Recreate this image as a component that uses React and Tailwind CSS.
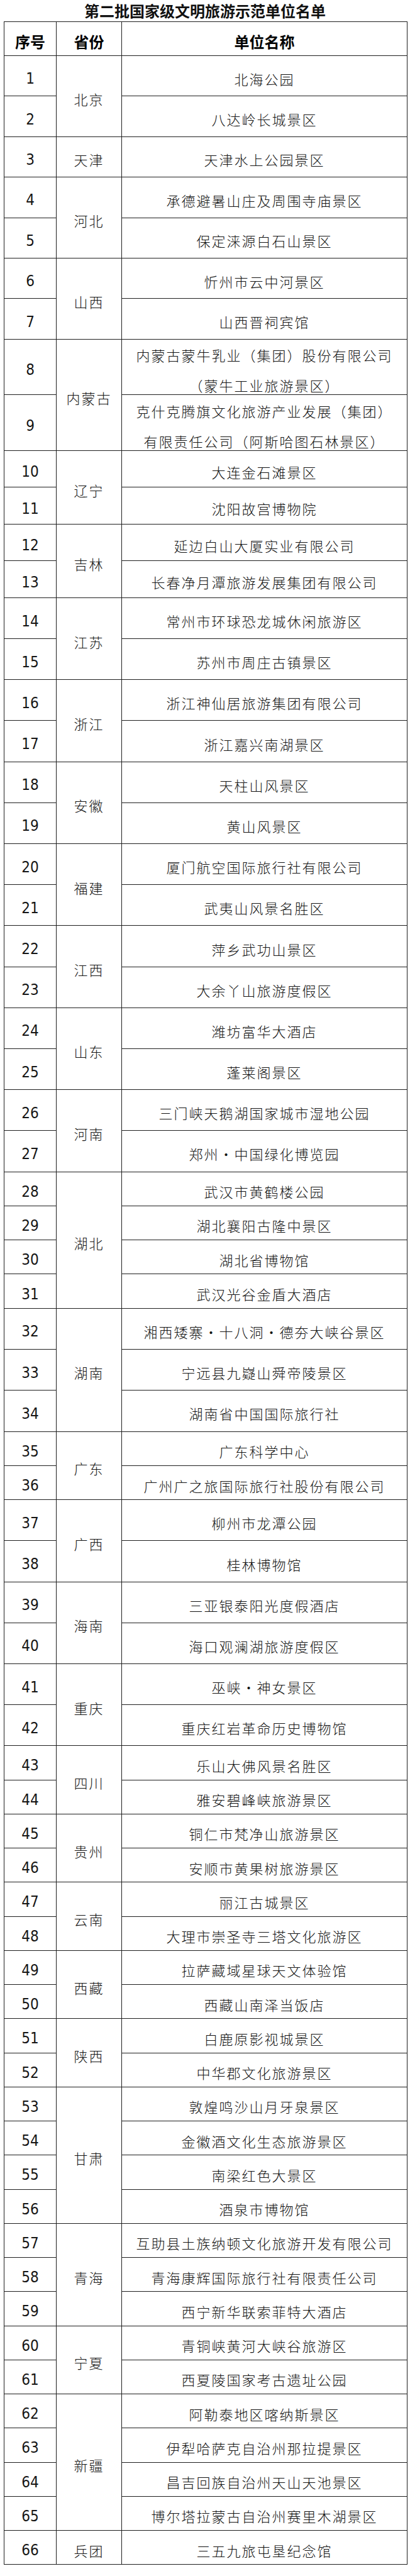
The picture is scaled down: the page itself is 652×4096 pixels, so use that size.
import React from "react";

const groups = [
  ["北京", ["北海公园", "八达岭长城景区"]],
  ["天津", ["天津水上公园景区"]],
  ["河北", ["承德避暑山庄及周围寺庙景区", "保定涞源白石山景区"]],
  ["山西", ["忻州市云中河景区", "山西晋祠宾馆"]],
  [
    "内蒙古",
    [
      ["内蒙古蒙牛乳业（集团）股份有限公司", "（蒙牛工业旅游景区）"],
      ["克什克腾旗文化旅游产业发展（集团）", "有限责任公司（阿斯哈图石林景区）"],
    ],
  ],
  ["辽宁", ["大连金石滩景区", "沈阳故宫博物院"]],
  ["吉林", ["延边白山大厦实业有限公司", "长春净月潭旅游发展集团有限公司"]],
  ["江苏", ["常州市环球恐龙城休闲旅游区", "苏州市周庄古镇景区"]],
  ["浙江", ["浙江神仙居旅游集团有限公司", "浙江嘉兴南湖景区"]],
  ["安徽", ["天柱山风景区", "黄山风景区"]],
  ["福建", ["厦门航空国际旅行社有限公司", "武夷山风景名胜区"]],
  ["江西", ["萍乡武功山景区", "大余丫山旅游度假区"]],
  ["山东", ["潍坊富华大酒店", "蓬莱阁景区"]],
  ["河南", ["三门峡天鹅湖国家城市湿地公园", "郑州·中国绿化博览园"]],
  ["湖北", ["武汉市黄鹤楼公园", "湖北襄阳古隆中景区", "湖北省博物馆", "武汉光谷金盾大酒店"]],
  ["湖南", ["湘西矮寨·十八洞·德夯大峡谷景区", "宁远县九嶷山舜帝陵景区", "湖南省中国国际旅行社"]],
  ["广东", ["广东科学中心", "广州广之旅国际旅行社股份有限公司"]],
  ["广西", ["柳州市龙潭公园", "桂林博物馆"]],
  ["海南", ["三亚银泰阳光度假酒店", "海口观澜湖旅游度假区"]],
  ["重庆", ["巫峡·神女景区", "重庆红岩革命历史博物馆"]],
  ["四川", ["乐山大佛风景名胜区", "雅安碧峰峡旅游景区"]],
  ["贵州", ["铜仁市梵净山旅游景区", "安顺市黄果树旅游景区"]],
  ["云南", ["丽江古城景区", "大理市崇圣寺三塔文化旅游区"]],
  ["西藏", ["拉萨藏域星球天文体验馆", "西藏山南泽当饭店"]],
  ["陕西", ["白鹿原影视城景区", "中华郡文化旅游景区"]],
  ["甘肃", ["敦煌鸣沙山月牙泉景区", "金徽酒文化生态旅游景区", "南梁红色大景区", "酒泉市博物馆"]],
  ["青海", ["互助县土族纳顿文化旅游开发有限公司", "青海康辉国际旅行社有限责任公司", "西宁新华联索菲特大酒店"]],
  ["宁夏", ["青铜峡黄河大峡谷旅游区", "西夏陵国家考古遗址公园"]],
  ["新疆", ["阿勒泰地区喀纳斯景区", "伊犁哈萨克自治州那拉提景区", "昌吉回族自治州天山天池景区", "博尔塔拉蒙古自治州赛里木湖景区"]],
  ["兵团", ["三五九旅屯垦纪念馆"]],
];

const spans = { 1: "row-span-1", 2: "row-span-2", 3: "row-span-3", 4: "row-span-4" };

// row heights follow the source document, which is not uniform
const rowHeight = (n) => {
  if (n <= 7) return "h-[64.4px]";
  if (n <= 9) return "h-[88.6px]";
  if (n <= 13) return "h-[58.5px]";
  if (n <= 27) return "h-[65.2px]";
  if (n <= 31) return "h-[54.3px]";
  if (n <= 34) return "h-[65.3px]";
  if (n <= 36) return "h-[54.3px]";
  if (n <= 42) return "h-[65.2px]";
  return "h-[54.25px]";
};

const cell = "flex items-center justify-center border-r border-b border-[#1f1f1f] pt-[9px]";
const cjk = "font-['Noto_Sans_CJK_SC',sans-serif] font-light text-[22px] tracking-[2px] text-[#151515]";
const num = "font-['Liberation_Sans_Narrow','DejaVu_Sans_Condensed','Liberation_Sans',sans-serif] text-[24px] text-[#151515]";

const App = () => {
  let n = 0;
  const cells = [];
  groups.forEach(([province, units]) => {
    units.forEach((unit, i) => {
      n += 1;
      cells.push(
        <div key={"n" + n} className={`${cell} ${rowHeight(n)} ${num}`}>
          {n}
        </div>
      );
      if (i === 0) {
        cells.push(
          <div key={"p" + n} className={`${cell} ${spans[units.length]} ${cjk}`}>
            {province}
          </div>
        );
      }
      cells.push(
        <div key={"u" + n} className={`${cell} ${cjk} text-center`}>
          {Array.isArray(unit) ? (
            // fixed box so the two 48px lines don't stretch the row
            <div className="flex h-[70px] flex-col justify-center">
              <div className="leading-[48px]">{unit[0]}</div>
              <div className="leading-[48px]">{unit[1]}</div>
            </div>
          ) : (
            unit
          )}
        </div>
      );
    });
  });

  return (
    <div className="w-[652px] bg-white pb-[14px]">
      <div className="flex h-[34px] items-center justify-center font-['Noto_Sans_CJK_SC',sans-serif] text-[24px] font-bold text-[#111]">
        第二批国家级文明旅游示范单位名单
      </div>
      <div className="ml-[6px] grid w-[642px] grid-cols-[83px_104px_454px] border-t border-l border-[#1f1f1f]">
        <div className={`${cell} h-[54px] font-['Noto_Sans_CJK_SC',sans-serif] text-[24px] font-bold`}>序号</div>
        <div className={`${cell} h-[54px] font-['Noto_Sans_CJK_SC',sans-serif] text-[24px] font-bold`}>省份</div>
        <div className={`${cell} h-[54px] font-['Noto_Sans_CJK_SC',sans-serif] text-[24px] font-bold`}>单位名称</div>
        {cells}
      </div>
    </div>
  );
};

export default App;
